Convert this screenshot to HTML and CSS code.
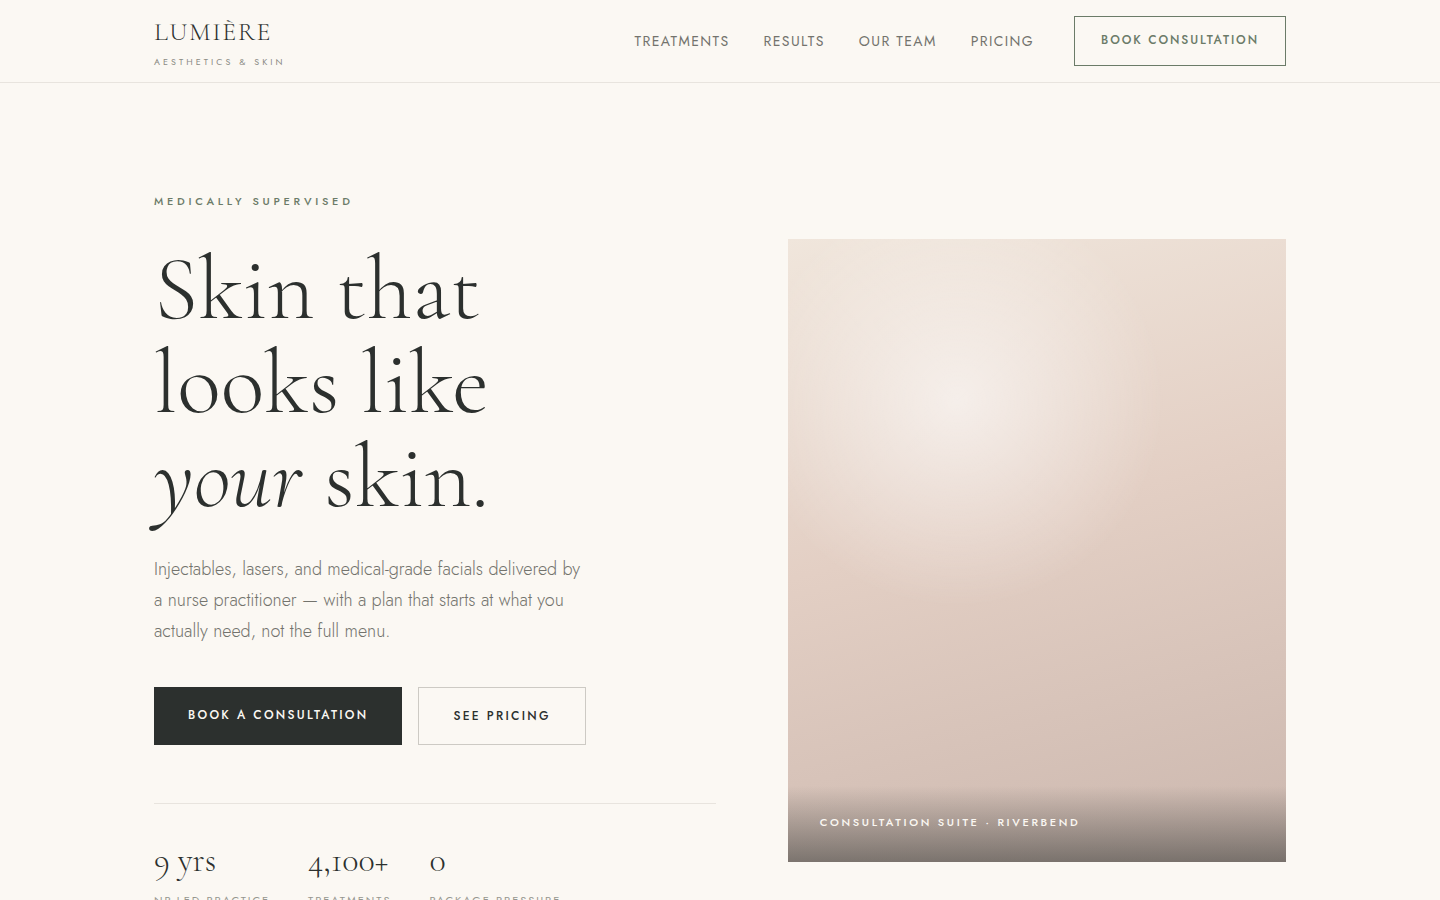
FILE: index.html
```html
<!DOCTYPE html>
<html lang="en">
<head>
<meta charset="utf-8">
<meta name="viewport" content="width=device-width, initial-scale=1">
<title>Lumière Aesthetics &amp; Skin</title>
<link rel="stylesheet" href="styles.css">
</head>
<body>
<header class="site-header">
  <div class="container header-inner">
    <a class="brand" href="#">
      <span class="brand-name">LUMIÈRE</span>
      <span class="brand-tag">AESTHETICS &amp; SKIN</span>
    </a>
    <div class="header-right">
      <nav class="nav" aria-label="Main">
        <a href="#treatments">TREATMENTS</a>
        <a href="#results">RESULTS</a>
        <a href="#team">OUR TEAM</a>
        <a href="#pricing">PRICING</a>
      </nav>
      <a class="btn btn-header" href="#book">BOOK CONSULTATION</a>
    </div>
  </div>
</header>
<main class="container hero">
  <section class="hero-copy">
    <p class="eyebrow">MEDICALLY SUPERVISED</p>
    <h1 class="headline">Skin that<br>looks like<br><em>your</em> skin.</h1>
    <p class="lede">Injectables, lasers, and medical-grade facials delivered by a nurse practitioner — with a plan that starts at what you actually need, not the full menu.</p>
    <div class="actions">
      <a class="btn btn-dark" href="#book">BOOK A CONSULTATION</a>
      <a class="btn btn-light" href="#pricing">SEE PRICING</a>
    </div>
    <dl class="stats">
      <div class="stat"><dt>NP-LED PRACTICE</dt><dd>9 yrs</dd></div>
      <div class="stat"><dt>TREATMENTS</dt><dd>4,100+</dd></div>
      <div class="stat"><dt>PACKAGE PRESSURE</dt><dd>0</dd></div>
    </dl>
  </section>
  <figure class="hero-art">
    <figcaption>CONSULTATION SUITE · RIVERBEND</figcaption>
  </figure>
</main>
</body>
</html>
```

FILE: styles.css
```css
:root {
  --paper: #fbf8f3;
  --ink: #2c302e;
  --muted: #73736d;
  --faint: #96968f;
  --sage: #6b7b68;
  --line: #e8e4de;
  --serif: "Cormorant Garamond", "Liberation Serif", serif;
  --sans: Jost, Lato, sans-serif;
}
* { box-sizing: border-box; }
body {
  margin: 0;
  background: var(--paper);
  color: var(--ink);
  font-family: var(--sans);
}
a { color: inherit; text-decoration: none; }
.container {
  width: 100%;
  max-width: 1196px;
  margin: 0 auto;
  padding: 0 32px;
}
.site-header { border-bottom: 1px solid var(--line); }
.header-inner {
  display: flex;
  align-items: flex-start;
  justify-content: space-between;
  padding-top: 16px;
  padding-bottom: 15px;
}
.brand { display: flex; flex-direction: column; gap: 9px; }
.brand-name {
  font: 300 26px/32px var(--serif);
  letter-spacing: 0.06em;
}
.brand-tag {
  font-size: 9px;
  line-height: 10px;
  letter-spacing: 0.34em;
  color: #8a8a83;
}
.header-right { display: flex; align-items: center; gap: 40px; }
.nav {
  display: flex;
  gap: 34px;
  font-size: 14px;
  line-height: 20px;
  letter-spacing: 0.1em;
  color: var(--muted);
}
.btn {
  display: inline-block;
  font-size: 12px;
  font-weight: 500;
  line-height: 18px;
  letter-spacing: 0.16em;
  white-space: nowrap;
}
.btn-header {
  padding: 14px 26px 16px;
  border: 1px solid var(--sage);
  color: var(--sage);
}
.hero {
  display: grid;
  grid-template-columns: 53fr 47fr;
  align-items: center;
  gap: 72px;
  padding-top: 110px;
  padding-bottom: 110px;
}
.eyebrow {
  margin: 0 0 33px;
  font-size: 11px;
  font-weight: 500;
  line-height: 16px;
  letter-spacing: 0.34em;
  color: var(--sage);
}
.headline {
  margin: 0 0 30px;
  font: 300 91px/94px var(--serif);
}
.lede {
  max-width: 430px;
  margin: 0 0 40px;
  font-size: 18px;
  font-weight: 300;
  line-height: 31px;
  color: var(--muted);
}
.actions { display: flex; flex-wrap: wrap; gap: 16px; }
.actions .btn { letter-spacing: 0.19em; }
.btn-dark {
  padding: 19px 34px 21px;
  background: var(--ink);
  color: var(--paper);
}
.btn-light {
  padding: 19px 34px;
  border: 1px solid #cdcac4;
}
.stats {
  display: flex;
  gap: 38px;
  margin: 58px 0 0;
  padding-top: 40px;
  border-top: 1px solid var(--line);
}
.stat { display: flex; flex-direction: column-reverse; justify-content: flex-end; gap: 14px; }
.stat dd { margin: 0; font: 300 34px/34px var(--serif); }
.stat dt {
  font-size: 11px;
  line-height: 16px;
  letter-spacing: 0.18em;
  color: var(--faint);
}
.hero-art {
  display: flex;
  align-items: flex-end;
  margin: 0;
  aspect-ratio: 4 / 5;
  background:
    radial-gradient(circle at 34% 26%, rgba(255, 255, 255, 0.58), rgba(255, 255, 255, 0) 206px),
    linear-gradient(165deg, #f0e6dc 0%, #e3cfc4 45%, #cbb7ae 100%);
}
.hero-art figcaption {
  width: 100%;
  padding: 28px 32px 32px;
  background: linear-gradient(to bottom, rgba(44, 48, 46, 0), rgba(44, 48, 46, 0.52));
  font-size: 11px;
  font-weight: 500;
  line-height: 16px;
  letter-spacing: 0.24em;
  color: var(--paper);
}
```
